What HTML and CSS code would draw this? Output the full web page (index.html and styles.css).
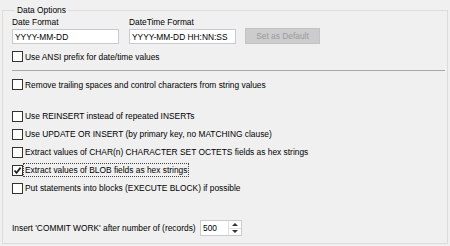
FILE: index.html
```html
<!DOCTYPE html>
<html>
<head>
    <meta charset="UTF-8">
    <title>Data Options</title>
    <link rel="stylesheet" href="styles.css">
</head>
<body>
    <fieldset class="group">
        <legend>Data Options</legend>

        <div class="formats">
            <div class="field">
                <label for="dateFormat">Date Format</label>
                <input type="text" id="dateFormat" class="edit" value="YYYY-MM-DD">
            </div>
            <div class="field">
                <label for="dateTimeFormat">DateTime Format</label>
                <input type="text" id="dateTimeFormat" class="edit" value="YYYY-MM-DD HH:NN:SS">
            </div>
            <button type="button" class="btn" disabled>Set as Default</button>
        </div>

        <div class="check first"><span class="box"></span><span class="text">Use ANSI prefix for date/time values</span></div>
        <div class="separator"></div>
        <div class="check"><span class="box"></span><span class="text">Remove trailing spaces and control characters from string values</span></div>

        <div class="checks">
            <div class="check"><span class="box"></span><span class="text">Use REINSERT instead of repeated INSERTs</span></div>
            <div class="check"><span class="box"></span><span class="text">Use UPDATE OR INSERT (by primary key, no MATCHING clause)</span></div>
            <div class="check"><span class="box"></span><span class="text">Extract values of CHAR(n) CHARACTER SET OCTETS fields as hex strings</span></div>
            <div class="check"><span class="box checked"><svg width="9" height="9" viewBox="0 0 9 9"><path d="M1.5 4.5 L3.5 6.8 L7.6 1.6" fill="none" stroke="#222" stroke-width="1.7"/></svg></span><span class="text focus">Extract values of BLOB fields as hex strings</span></div>
            <div class="check"><span class="box"></span><span class="text">Put statements into blocks (EXECUTE BLOCK) if possible</span></div>
        </div>

        <div class="commit">
            <label for="commitCount" class="commit-label">Insert 'COMMIT WORK' after number of (records)</label>
            <div class="spin">
                <input type="text" id="commitCount" value="500">
                <div class="spin-buttons">
                    <span class="arrow up"></span>
                    <span class="arrow down"></span>
                </div>
            </div>
        </div>
    </fieldset>
</body>
</html>
```
FILE: styles.css
```css
html, body {
    margin: 0;
    background: #f0f0f0;
}
body {
    font-family: "Liberation Sans", Arial, sans-serif;
    font-size: 8.4px;
    color: #000;
    width: 450px;
    height: 246px;
    overflow: hidden;
}
.group {
    margin: 5px 2px 0 2px;
    height: 239px;
    box-sizing: border-box;
    border: 1px solid #dcdcdc;
    padding: 0 0 0 9px;
}
.group legend {
    padding: 0 2px;
    margin-left: 3px;
    line-height: 10px;
    margin-top: -5px;
}
.formats {
    display: flex;
    align-items: flex-end;
    gap: 10px;
    margin-top: 2px;
}
.field {
    display: flex;
    flex-direction: column;
    width: 107px;
}
.field label {
    line-height: 10px;
    margin-bottom: 2px;
}
.edit, .spin input {
    font-family: inherit;
    font-size: inherit;
    height: 15px;
    box-sizing: border-box;
    border: 1px solid #c8cacf;
    background: #fff;
    padding: 0 2px;
    margin: 0;
    outline: none;
}
.btn {
    width: 75px;
    height: 16px;
    margin-left: -1px;
    font-family: inherit;
    font-size: inherit;
    color: #9a9a9a;
    background: #cccccc;
    border: 1px solid #c4c4c4;
    padding: 0;
}
.check {
    display: flex;
    align-items: center;
    height: 17px;
}
.check.first {
    margin-top: 4px;
}
.box {
    width: 11px;
    height: 11px;
    box-sizing: border-box;
    border: 1px solid #333;
    background: #fff;
    margin-right: 2px;
    display: flex;
    align-items: center;
    justify-content: center;
}
.text.focus {
    outline: 1px dotted #444;
    outline-offset: 1px;
}
.separator {
    height: 1px;
    background: #a8a8a8;
    margin: 5px 2px 5px 0;
}
.checks {
    margin-top: 14px;
}
.checks .check {
    height: 18px;
}
.commit {
    display: flex;
    align-items: center;
    margin-top: 23px;
}
.commit-label {
    width: 188px;
}
.spin {
    display: flex;
    width: 42px;
    height: 16px;
    box-sizing: border-box;
    border: 1px solid #c8cacf;
    background: #fff;
}
.spin input {
    border: none;
    height: 14px;
    width: 27px;
}
.spin-buttons {
    display: flex;
    flex-direction: column;
    width: 13px;
    border-left: 1px solid #e0e0e0;
}
.arrow {
    flex: 1;
    display: flex;
    align-items: center;
    justify-content: center;
}
.arrow.up {
    border-bottom: 1px solid #e0e0e0;
}
.arrow::before {
    content: "";
    border-left: 3px solid transparent;
    border-right: 3px solid transparent;
}
.arrow.up::before {
    border-bottom: 3px solid #333;
}
.arrow.down::before {
    border-top: 3px solid #333;
}
```
